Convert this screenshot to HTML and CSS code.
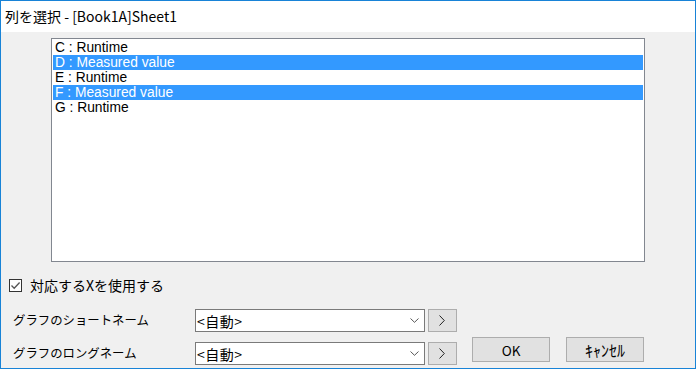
FILE: index.html
```html
<!DOCTYPE html>
<html lang="ja">
<head>
<meta charset="utf-8">
<title>列を選択</title>
<link rel="stylesheet" href="styles.css">
</head>
<body>
<div class="window">
  <div class="titlebar">列を選択 - [Book1A]Sheet1</div>
  <div class="content">
    <div class="listbox">
      <div class="item">C : Runtime</div>
      <div class="item sel">D : Measured value</div>
      <div class="item">E : Runtime</div>
      <div class="item sel">F : Measured value</div>
      <div class="item">G : Runtime</div>
    </div>
    <label class="check">
      <span class="box"><svg width="11" height="11" viewBox="0 0 11 11"><polyline points="1.5,5.5 4.2,8.3 9.6,2.5" fill="none" stroke="#555" stroke-width="1.3"/></svg></span>
      <span class="check-text">対応するXを使用する</span>
    </label>
    <div class="bottom">
      <div class="fields">
        <div class="label">グラフのショートネーム</div>
        <div class="combo"><span>&lt;自動&gt;</span><svg class="arrow" width="9" height="5" viewBox="0 0 9 5"><polyline points="0.5,0.5 4.5,4.3 8.5,0.5" fill="none" stroke="#444" stroke-width="0.9"/></svg></div>
        <div class="sbtn"><svg width="6" height="11" viewBox="0 0 6 11"><polyline points="0.5,0.5 5.3,5.5 0.5,10.5" fill="none" stroke="#222" stroke-width="1"/></svg></div>
        <div class="label">グラフのロングネーム</div>
        <div class="combo"><span>&lt;自動&gt;</span><svg class="arrow" width="9" height="5" viewBox="0 0 9 5"><polyline points="0.5,0.5 4.5,4.3 8.5,0.5" fill="none" stroke="#444" stroke-width="0.9"/></svg></div>
        <div class="sbtn"><svg width="6" height="11" viewBox="0 0 6 11"><polyline points="0.5,0.5 5.3,5.5 0.5,10.5" fill="none" stroke="#222" stroke-width="1"/></svg></div>
      </div>
      <div class="actions">
        <div class="btn">OK</div>
        <div class="btn btn-kana">ｷｬﾝｾﾙ</div>
      </div>
    </div>
  </div>
</div>
</body>
</html>
```
FILE: styles.css
```css
html, body {
  margin: 0;
  padding: 0;
}
body {
  font-family: "Noto Sans CJK JP", "Noto Sans", sans-serif;
  color: #000;
}
.window {
  width: 696px;
  height: 369px;
  box-sizing: border-box;
  border: 1px solid #1883d7;
  display: flex;
  flex-direction: column;
  overflow: hidden;
}
.titlebar {
  height: 31px;
  background: #fff;
  padding-left: 4px;
  font-size: 14px;
  line-height: 30px;
  color: #000;
  white-space: nowrap;
}
.content {
  flex: 1;
  background: #f0f0f0;
  padding: 6px 0 3px 0;
  display: flex;
  flex-direction: column;
}
.listbox {
  margin-left: 50px;
  width: 594px;
  height: 224px;
  box-sizing: border-box;
  border: 1px solid #828790;
  background: #fff;
  padding: 1px;
}
.item {
  height: 15px;
  line-height: 16px;
  padding-left: 2px;
  font-family: "Liberation Sans", Arial, sans-serif;
  font-size: 13.8px;
  white-space: nowrap;
}
.item.sel {
  background: #3399ff;
  color: #fff;
}
.check {
  margin-top: 17px;
  margin-left: 8px;
  height: 13px;
  display: flex;
  align-items: center;
}
.box {
  width: 13px;
  height: 13px;
  box-sizing: border-box;
  border: 1px solid #333;
  background: #fff;
  display: flex;
  align-items: center;
  justify-content: center;
}
.check-text {
  margin-left: 8px;
  font-size: 14px;
  line-height: 13px;
  white-space: nowrap;
}
.bottom {
  margin-top: 17px;
  display: flex;
}
.fields {
  display: grid;
  grid-template-columns: 180px 230px 29px;
  grid-auto-rows: 23px;
  row-gap: 10px;
  column-gap: 3px;
  margin-left: 11px;
}
.label {
  font-size: 12.4px;
  line-height: 23px;
  white-space: nowrap;
  padding-left: 1px;
}
.combo {
  box-sizing: border-box;
  border: 1px solid #7a7a7a;
  background: #fff;
  display: flex;
  align-items: center;
  justify-content: space-between;
  padding: 0 5px 0 1px;
  font-size: 14px;
  letter-spacing: 0.5px;
  white-space: nowrap;
}
.sbtn {
  box-sizing: border-box;
  border: 1px solid #adadad;
  background: #e1e1e1;
  display: flex;
  align-items: center;
  justify-content: center;
  padding-right: 2px;
}
.actions {
  display: flex;
  gap: 16px;
  margin-left: 15px;
  align-self: flex-end;
  margin-bottom: 3px;
}
.btn {
  width: 78px;
  height: 25px;
  box-sizing: border-box;
  border: 1px solid #adadad;
  background: #e1e1e1;
  display: flex;
  align-items: center;
  justify-content: center;
  font-size: 13.5px;
  white-space: nowrap;
}
.btn-kana {
  font-size: 16px;
}
```
